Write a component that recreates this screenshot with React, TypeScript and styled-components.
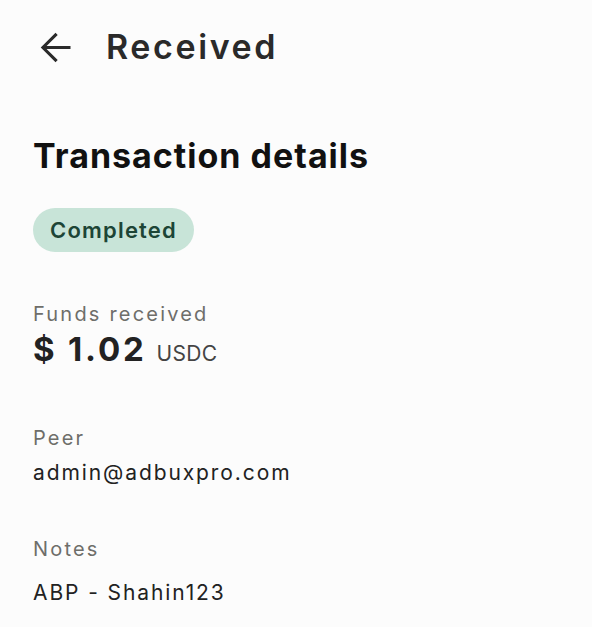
import React from 'react';
import styled, { createGlobalStyle } from 'styled-components';

const GlobalStyle = createGlobalStyle`
  body {
    margin: 0;
    background: #fcfcfc;
    font-family: Inter, "Noto Sans", sans-serif;
    color: #222222;
  }
`;

const Page = styled.div`
  display: flex;
  flex-direction: column;
  align-items: flex-start;
  padding: 23px 33px 24px;
  min-height: 100vh;
  box-sizing: border-box;
`;

// ---- header -----------------------------------------------------------------

const Header = styled.header`
  display: flex;
  align-items: center;
  gap: 28px;
  height: 48px;
`;

const BackButton = styled.button`
  display: flex;
  padding: 0;
  border: 0;
  background: none;
  color: #2a2a2a;
  cursor: pointer;
`;

const ScreenTitle = styled.h1`
  margin: 0;
  font-size: 34px;
  line-height: 48px;
  font-weight: 600;
  letter-spacing: 2.6px;
  color: #2a2a2a;
`;

// ---- content ----------------------------------------------------------------

const SectionTitle = styled.h2`
  margin: 65px 0 0;
  font-size: 34px;
  line-height: 40px;
  font-weight: 700;
  letter-spacing: 1px;
  color: #111111;
`;

const StatusBadge = styled.span`
  display: inline-flex;
  align-items: center;
  height: 44px;
  margin-top: 32px;
  padding: 0 17px;
  border-radius: 22px;
  background: #c8e4d8;
  color: #1d4536;
  font-size: 22px;
  font-weight: 600;
  letter-spacing: 1.2px;
`;

const Field = styled.div<{ $gap: number }>`
  display: flex;
  flex-direction: column;
  gap: ${({ $gap }) => $gap}px;
`;

const Label = styled.div`
  font-size: 20px;
  line-height: 24px;
  letter-spacing: 2.2px;
  color: #6e6e6a;
`;

const Value = styled.div`
  font-size: 21px;
  line-height: 28px;
  letter-spacing: 1.9px;
  color: #222222;
`;

const Amount = styled.div`
  display: flex;
  align-items: baseline;
  gap: 10px;
`;

const AmountValue = styled.span`
  font-size: 33px;
  line-height: 36px;
  font-weight: 700;
  letter-spacing: 2.8px;
  color: #222222;
`;

const Currency = styled.span`
  font-size: 21px;
  letter-spacing: 0.3px;
  color: #444444;
`;

const Funds = styled(Field)`
  margin-top: 50px;
`;

const Peer = styled(Field)`
  margin-top: 59px;
`;

const Notes = styled(Field)`
  margin-top: 50px;
`;

const ArrowBack = () => (
  <svg
    width="45"
    height="45"
    viewBox="0 0 24 24"
    fill="none"
    stroke="currentColor"
    strokeWidth="1.65"
    strokeLinejoin="miter"
    aria-hidden="true"
  >
    <path d="M20 12H5.3M12.6 4.7 5.3 12l7.3 7.3" />
  </svg>
);

export default function App() {
  return (
    <>
      <GlobalStyle />
      <Page>
        <Header>
          <BackButton aria-label="Back">
            <ArrowBack />
          </BackButton>
          <ScreenTitle>Received</ScreenTitle>
        </Header>

        <SectionTitle>Transaction details</SectionTitle>
        <StatusBadge>Completed</StatusBadge>

        <Funds $gap={5}>
          <Label>Funds received</Label>
          <Amount>
            <AmountValue>$ 1.02</AmountValue>
            <Currency>USDC</Currency>
          </Amount>
        </Funds>

        <Peer $gap={9}>
          <Label>Peer</Label>
          <Value>admin@adbuxpro.com</Value>
        </Peer>

        <Notes $gap={18}>
          <Label>Notes</Label>
          <Value>ABP - Shahin123</Value>
        </Notes>
      </Page>
    </>
  );
}
